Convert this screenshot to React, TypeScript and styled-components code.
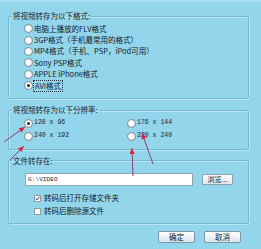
import React from 'react'
import styled, { createGlobalStyle } from 'styled-components'

const GlobalStyle = createGlobalStyle`
  html, body {
    margin: 0;
    padding: 0;
    background: #93d5ea;
  }
`

const formats = [
  { label: '电脑上播放的FLV格式' },
  { label: '3GP格式（手机最常用的格式）' },
  { label: 'MP4格式（手机、PSP，iPod可用）' },
  { label: 'Sony PSP格式' },
  { label: 'APPLE iPhone格式' },
  { label: 'AVI格式', checked: true, focused: true },
]

const sizes = [
  { label: '128 x 96', checked: true },
  { label: '176 x 144' },
  { label: '240 x 192' },
  { label: '320 x 240' },
]

const arrows = [
  { x1: 4, y1: 142, x2: 25, y2: 127 },
  { x1: 10, y1: 160, x2: 24, y2: 146 },
  { x1: 133, y1: 176, x2: 132, y2: 148 },
  { x1: 153, y1: 164, x2: 142, y2: 133 },
]

const head = (a: { x1: number; y1: number; x2: number; y2: number }) => {
  const dx = a.x2 - a.x1
  const dy = a.y2 - a.y1
  const len = Math.hypot(dx, dy)
  const ux = dx / len
  const uy = dy / len
  const bx = a.x2 - ux * 6
  const by = a.y2 - uy * 6
  const px = -uy * 2.6
  const py = ux * 2.6
  return `${a.x2},${a.y2} ${bx + px},${by + py} ${bx - px},${by - py}`
}

const App: React.FC = () => {
  return (
    <Page>
      <GlobalStyle />
      <TopBand />
      <Group $padTop={2} $padBottom={7}>
        <Legend>将视频转存为以下格式:</Legend>
        <FormatList>
          {formats.map((f) => (
            <Option key={f.label}>
              <Radio $checked={!!f.checked} />
              <Label $focused={!!f.focused}>{f.label}</Label>
            </Option>
          ))}
        </FormatList>
      </Group>

      <Group $padTop={1.5} $padBottom={6}>
        <Legend>将视频转存为以下分辨率:</Legend>
        <SizeGrid>
          {sizes.map((s) => (
            <SizeOption key={s.label}>
              <Radio $checked={!!s.checked} />
              <MonoLabel>{s.label}</MonoLabel>
            </SizeOption>
          ))}
        </SizeGrid>
      </Group>

      <Group $padTop={7} $padBottom={5}>
        <Legend>文件转存在:</Legend>
        <PathRow>
          <PathInput>G:\VIDEO</PathInput>
          <SmallButton>浏览...</SmallButton>
        </PathRow>
        <CheckList>
          <CheckRow>
            <CheckBox $checked>
              <svg width="7" height="7" viewBox="0 0 7 7">
                <path d="M1 3.5 L2.8 5.4 L6 1.2" fill="none" stroke="#1c2a44" strokeWidth="1.3" />
              </svg>
            </CheckBox>
            <Label>转码后打开存储文件夹</Label>
          </CheckRow>
          <CheckRow>
            <CheckBox />
            <Label>转码后删除源文件</Label>
          </CheckRow>
        </CheckList>
      </Group>

      <ButtonBar>
        <DialogButton>确定</DialogButton>
        <DialogButton>取消</DialogButton>
      </ButtonBar>

      <Overlay width="261" height="249" viewBox="0 0 261 249">
        {arrows.map((a, i) => (
          <g key={i}>
            <line x1={a.x1} y1={a.y1} x2={a.x2} y2={a.y2} stroke="#8c3f6c" strokeWidth="1" />
            <polygon points={head(a)} fill="#e3203c" />
          </g>
        ))}
      </Overlay>
    </Page>
  )
}

const Page = styled.div`
  position: relative;
  width: 261px;
  height: 249px;
  overflow: hidden;
  box-sizing: border-box;
  padding: 0 12px 0 8px;
  display: flex;
  flex-direction: column;
  gap: 6px;
  background: #93d5ea;
  font-family: 'Noto Sans CJK SC', 'Noto Sans', sans-serif;
  font-size: 7.5px;
  line-height: 10px;
  color: #14202c;
`

const TopBand = styled.div`
  height: 2px;
  margin: 0 -12px 3px -8px;
  background: #a9e0f1;
`

const Group = styled.fieldset<{ $padTop: number; $padBottom: number }>`
  margin: 0;
  min-width: 0;
  padding: ${(p) => p.$padTop}px 4px ${(p) => p.$padBottom}px 3px;
  border: 1px solid #78b9d2;
  border-radius: 2px;
  box-shadow: inset 1px 1px 0 rgba(255, 255, 255, 0.35), 1px 1px 0 rgba(255, 255, 255, 0.35);
`

const Legend = styled.legend`
  padding: 0 1px;
  font-size: 7.5px;
  line-height: 10px;
  color: #1a2430;
`

const FormatList = styled.div`
  display: grid;
  grid-auto-rows: 11.4px;
  padding-left: 12px;
`

const Option = styled.div`
  display: flex;
  align-items: center;
  gap: 1px;
`

const Radio = styled.span<{ $checked: boolean }>`
  position: relative;
  flex: none;
  width: 9px;
  height: 9px;
  box-sizing: border-box;
  border-radius: 50%;
  border: 1px solid #7e8e9a;
  background: radial-gradient(circle at 40% 40%, #ffffff 0%, #f4f6f8 55%, #d9dfe4 100%);
  &::after {
    content: '';
    display: ${(p) => (p.$checked ? 'block' : 'none')};
    position: absolute;
    left: 2px;
    top: 2px;
    width: 3px;
    height: 3px;
    border-radius: 50%;
    background: #1d2a1c;
  }
`

const Label = styled.span<{ $focused?: boolean }>`
  white-space: nowrap;
  outline: ${(p) => (p.$focused ? '1px dotted #2a3440' : 'none')};
  outline-offset: 0;
  padding: 0 ${(p) => (p.$focused ? '1px' : '0')};
`

const SizeGrid = styled.div`
  display: grid;
  grid-template-columns: 103px 1fr;
  grid-auto-rows: 13px;
  padding-left: 12px;
`

const SizeOption = styled(Option)`
  gap: 1px;
`

const MonoLabel = styled.span`
  font-family: 'Liberation Mono', 'DejaVu Sans Mono', monospace;
  font-size: 6.5px;
  color: #1a2a3c;
  white-space: nowrap;
`

const PathRow = styled.div`
  display: flex;
  align-items: center;
  gap: 9px;
  padding-left: 13px;
`

const PathInput = styled.div`
  width: 168px;
  height: 13px;
  box-sizing: border-box;
  border: 1px solid #8ea6b4;
  background: #ffffff;
  padding-left: 2px;
  font-family: 'Liberation Mono', 'DejaVu Sans Mono', monospace;
  font-size: 6.2px;
  line-height: 11px;
  color: #1a2a3c;
`

const SmallButton = styled.div`
  width: 31px;
  height: 11px;
  box-sizing: border-box;
  border: 1px solid #8ea2ae;
  border-radius: 1px;
  background: linear-gradient(#fbfcfd, #dfe7ec);
  text-align: center;
  line-height: 9px;
  font-size: 7px;
`

const CheckList = styled.div`
  display: grid;
  grid-auto-rows: 13px;
  padding: 6px 0 0 22px;
`

const CheckRow = styled.div`
  display: flex;
  align-items: center;
  gap: 3px;
`

const CheckBox = styled.span<{ $checked?: boolean }>`
  display: flex;
  align-items: center;
  justify-content: center;
  width: 7px;
  height: 7px;
  box-sizing: border-box;
  border: 1px solid #8d9ba6;
  background: linear-gradient(#f2f4f6, #ffffff);
`

const ButtonBar = styled.div`
  display: flex;
  justify-content: flex-end;
  gap: 9px;
  margin-top: 1px;
  padding-right: 8px;
`

const DialogButton = styled.div`
  width: 37px;
  height: 12px;
  box-sizing: border-box;
  border: 1px solid #7f96a6;
  border-radius: 2px;
  background: linear-gradient(#fdfefe 0%, #eef3f6 50%, #d6e1e8 100%);
  text-align: center;
  line-height: 10px;
  font-size: 7.5px;
  color: #14202c;
`

const Overlay = styled.svg`
  position: absolute;
  left: 0;
  top: 0;
  pointer-events: none;
`

export default App
